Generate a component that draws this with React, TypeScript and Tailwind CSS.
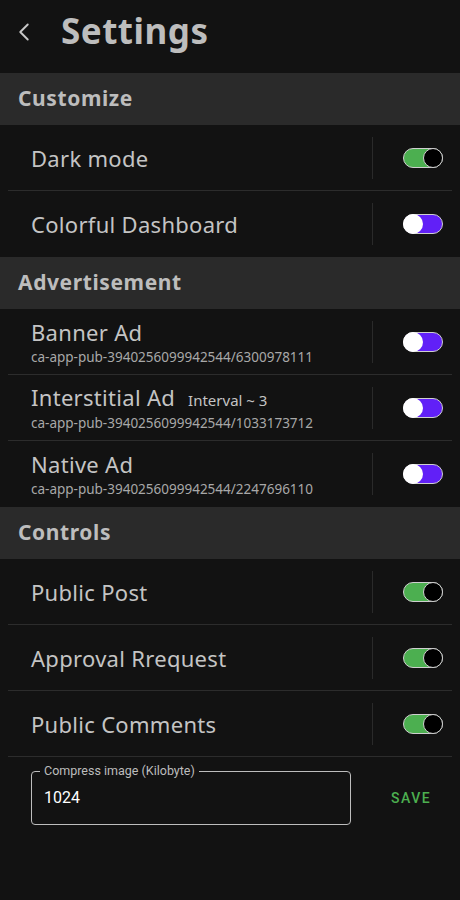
import { ChevronLeft } from 'lucide-react'

type Row = {
  title: string
  sub?: string
  extra?: string
  on: boolean
}

const sections: { name: string; rows: Row[]; lastDivider?: boolean }[] = [
  {
    name: 'Customize',
    rows: [
      { title: 'Dark mode', on: true },
      { title: 'Colorful Dashboard', on: false },
    ],
  },
  {
    name: 'Advertisement',
    rows: [
      { title: 'Banner Ad', sub: 'ca-app-pub-3940256099942544/6300978111', on: false },
      { title: 'Interstitial Ad', extra: 'Interval ~ 3', sub: 'ca-app-pub-3940256099942544/1033173712', on: false },
      { title: 'Native Ad', sub: 'ca-app-pub-3940256099942544/2247696110', on: false },
    ],
  },
  {
    name: 'Controls',
    lastDivider: true,
    rows: [
      { title: 'Public Post', on: true },
      { title: 'Approval Rrequest', on: true },
      { title: 'Public Comments', on: true },
    ],
  },
]

function Toggle({ on }: { on: boolean }) {
  if (on) {
    return (
      <div className="relative h-[20px] w-[40px] rounded-full border border-[#cfcfcf] bg-[#4caf50]">
        <div className="absolute right-[-1px] top-[-1px] h-[20px] w-[20px] rounded-full border border-[#cfcfcf] bg-black" />
      </div>
    )
  }
  return (
    <div className="relative h-[20px] w-[40px] rounded-full border border-[#cfcfcf] bg-[#6120f7]">
      <div className="absolute left-[-1px] top-[-1px] h-[20px] w-[20px] rounded-full bg-white" />
    </div>
  )
}

function SettingRow({ row, divider }: { row: Row; divider: boolean }) {
  return (
    <div className="px-2">
      <div className={`flex h-[66px] items-center ${divider ? 'border-b border-[#2c2c2c]' : ''}`}>
        <div className="flex-1 pl-[23px]">
          <div className="flex items-baseline">
            <span className="text-[22px] leading-[28px] tracking-[0.3px] text-[#c4c4c4]">{row.title}</span>
            {row.extra && <span className="ml-[13px] text-[15px] text-[#c4c4c4]">{row.extra}</span>}
          </div>
          {row.sub && <div className="mt-[3px] text-[13.5px] leading-[17px] text-[#a8a8a8]">{row.sub}</div>}
        </div>
        <div className="h-[42px] w-px bg-[#2a2a2a]" />
        <div className="flex w-[79px] justify-end pr-[9px]">
          <Toggle on={row.on} />
        </div>
      </div>
    </div>
  )
}

export default function App() {
  return (
    <div className="h-[900px] w-[460px] bg-[#121212]" style={{ fontFamily: '"Noto Sans", sans-serif' }}>
      <div className="flex h-[73px] items-center pb-[10px]">
        <ChevronLeft size={30} strokeWidth={1.5} className="ml-[9px] text-[#c8c8c8]" />
        <h1 className="ml-[22px] text-[35px] font-bold tracking-[0.5px] text-[#bdbdbd]">Settings</h1>
      </div>
      {sections.map((s) => (
        <div key={s.name}>
          <div className="flex h-[52px] items-center bg-[#2a2a2a] px-[18px]">
            <span className="text-[21px] font-bold tracking-[0.6px] text-[#bdbdbd]">{s.name}</span>
          </div>
          {s.rows.map((r, i) => (
            <SettingRow key={r.title} row={r} divider={i < s.rows.length - 1 || !!s.lastDivider} />
          ))}
        </div>
      ))}
      <div className="mt-[14px] flex items-center" style={{ fontFamily: 'Roboto, sans-serif' }}>
        <div className="relative ml-[31px] h-[54px] w-[320px] rounded-[4px] border border-[#bdbdbd]">
          <span className="absolute left-[8px] top-[-9px] bg-[#121212] px-[4px] text-[12.5px] leading-[16px] text-[#bdbdbd]">
            Compress image (Kilobyte)
          </span>
          <div className="pl-[12px] pt-[14px] text-[16px] text-white">1024</div>
        </div>
        <button className="ml-[40px] text-[14px] font-medium tracking-[1.5px] text-[#4caf50]">SAVE</button>
      </div>
    </div>
  )
}
